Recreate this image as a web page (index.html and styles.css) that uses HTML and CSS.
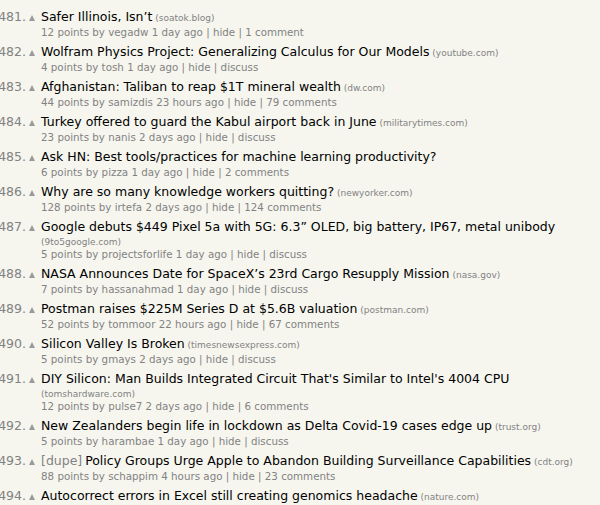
FILE: index.html
```html
<!DOCTYPE html>
<html>
<head>
    <title>Hacker News | page 17</title>
    <link rel="stylesheet" href="styles.css">
</head>
<body>
    <div class="itemlist">
        <div class="item">
            <span class="rank">481.</span><span class="vote"></span>
            <div class="title"><a class="storylink" href="#">Safer Illinois, Isn’t</a> <span class="sitebit">(soatok.blog)</span></div>
            <div class="subtext">12 points by vegadw 1 day ago | hide | 1 comment</div>
        </div>
        <div class="item">
            <span class="rank">482.</span><span class="vote"></span>
            <div class="title"><a class="storylink" href="#">Wolfram Physics Project: Generalizing Calculus for Our Models</a> <span class="sitebit">(youtube.com)</span></div>
            <div class="subtext">4 points by tosh 1 day ago | hide | discuss</div>
        </div>
        <div class="item">
            <span class="rank">483.</span><span class="vote"></span>
            <div class="title"><a class="storylink" href="#">Afghanistan: Taliban to reap $1T mineral wealth</a> <span class="sitebit">(dw.com)</span></div>
            <div class="subtext">44 points by samizdis 23 hours ago | hide | 79 comments</div>
        </div>
        <div class="item">
            <span class="rank">484.</span><span class="vote"></span>
            <div class="title"><a class="storylink" href="#">Turkey offered to guard the Kabul airport back in June</a> <span class="sitebit">(militarytimes.com)</span></div>
            <div class="subtext">23 points by nanis 2 days ago | hide | discuss</div>
        </div>
        <div class="item">
            <span class="rank">485.</span><span class="vote"></span>
            <div class="title"><a class="storylink" href="#">Ask HN: Best tools/practices for machine learning productivity?</a></div>
            <div class="subtext">6 points by pizza 1 day ago | hide | 2 comments</div>
        </div>
        <div class="item">
            <span class="rank">486.</span><span class="vote"></span>
            <div class="title"><a class="storylink" href="#">Why are so many knowledge workers quitting?</a> <span class="sitebit">(newyorker.com)</span></div>
            <div class="subtext">128 points by irtefa 2 days ago | hide | 124 comments</div>
        </div>
        <div class="item">
            <span class="rank">487.</span><span class="vote"></span>
            <div class="title"><a class="storylink" href="#">Google debuts $449 Pixel 5a with 5G: 6.3” OLED, big battery, IP67, metal unibody</a> <span class="sitebit">(9to5google.com)</span></div>
            <div class="subtext">5 points by projectsforlife 1 day ago | hide | discuss</div>
        </div>
        <div class="item">
            <span class="rank">488.</span><span class="vote"></span>
            <div class="title"><a class="storylink" href="#">NASA Announces Date for SpaceX’s 23rd Cargo Resupply Mission</a> <span class="sitebit">(nasa.gov)</span></div>
            <div class="subtext">7 points by hassanahmad 1 day ago | hide | discuss</div>
        </div>
        <div class="item">
            <span class="rank">489.</span><span class="vote"></span>
            <div class="title"><a class="storylink" href="#">Postman raises $225M Series D at $5.6B valuation</a> <span class="sitebit">(postman.com)</span></div>
            <div class="subtext">52 points by tommoor 22 hours ago | hide | 67 comments</div>
        </div>
        <div class="item">
            <span class="rank">490.</span><span class="vote"></span>
            <div class="title"><a class="storylink" href="#">Silicon Valley Is Broken</a> <span class="sitebit">(timesnewsexpress.com)</span></div>
            <div class="subtext">5 points by gmays 2 days ago | hide | discuss</div>
        </div>
        <div class="item">
            <span class="rank">491.</span><span class="vote"></span>
            <div class="title"><a class="storylink" href="#">DIY Silicon: Man Builds Integrated Circuit That's Similar to Intel's 4004 CPU</a> <span class="sitebit">(tomshardware.com)</span></div>
            <div class="subtext">12 points by pulse7 2 days ago | hide | 6 comments</div>
        </div>
        <div class="item">
            <span class="rank">492.</span><span class="vote"></span>
            <div class="title"><a class="storylink" href="#">New Zealanders begin life in lockdown as Delta Covid-19 cases edge up</a> <span class="sitebit">(trust.org)</span></div>
            <div class="subtext">5 points by harambae 1 day ago | hide | discuss</div>
        </div>
        <div class="item">
            <span class="rank">493.</span><span class="vote"></span>
            <div class="title"><span class="flag">[dupe]</span> <a class="storylink" href="#">Policy Groups Urge Apple to Abandon Building Surveillance Capabilities</a> <span class="sitebit">(cdt.org)</span></div>
            <div class="subtext">88 points by schappim 4 hours ago | hide | 23 comments</div>
        </div>
        <div class="item">
            <span class="rank">494.</span><span class="vote"></span>
            <div class="title"><a class="storylink" href="#">Autocorrect errors in Excel still creating genomics headache</a> <span class="sitebit">(nature.com)</span></div>
            <div class="subtext">3 points by rbanffy 2 hours ago | hide | discuss</div>
        </div>
    </div>
</body>
</html>
```

FILE: styles.css
```css
body { margin: 0; background: #f6f6ef; font-family: "DejaVu Sans", Verdana, sans-serif; overflow: hidden; }
.itemlist { padding-top: 8px; }
.item { display: grid; grid-template-columns: 26px 15px 1fr; padding-bottom: 5px; }
.rank { display: flex; justify-content: flex-end; font-size: 12.5px; line-height: 18px; color: #828282; white-space: nowrap; }
.vote { width: 0; height: 0; margin: 7px 0 0 3px; border-left: 3.5px solid transparent; border-right: 3.5px solid transparent; border-bottom: 6px solid #9a9a9a; }
.title { font-size: 9px; line-height: 12px; padding-right: 20px; }
.storylink { font-size: 12.5px; line-height: 18px; color: #000; text-decoration: none; }
.flag { font-size: 12.5px; line-height: 18px; color: #828282; }
.sitebit { color: #828282; }
.subtext { grid-column: 3; font-size: 10.3px; line-height: 12px; color: #828282; }
```
